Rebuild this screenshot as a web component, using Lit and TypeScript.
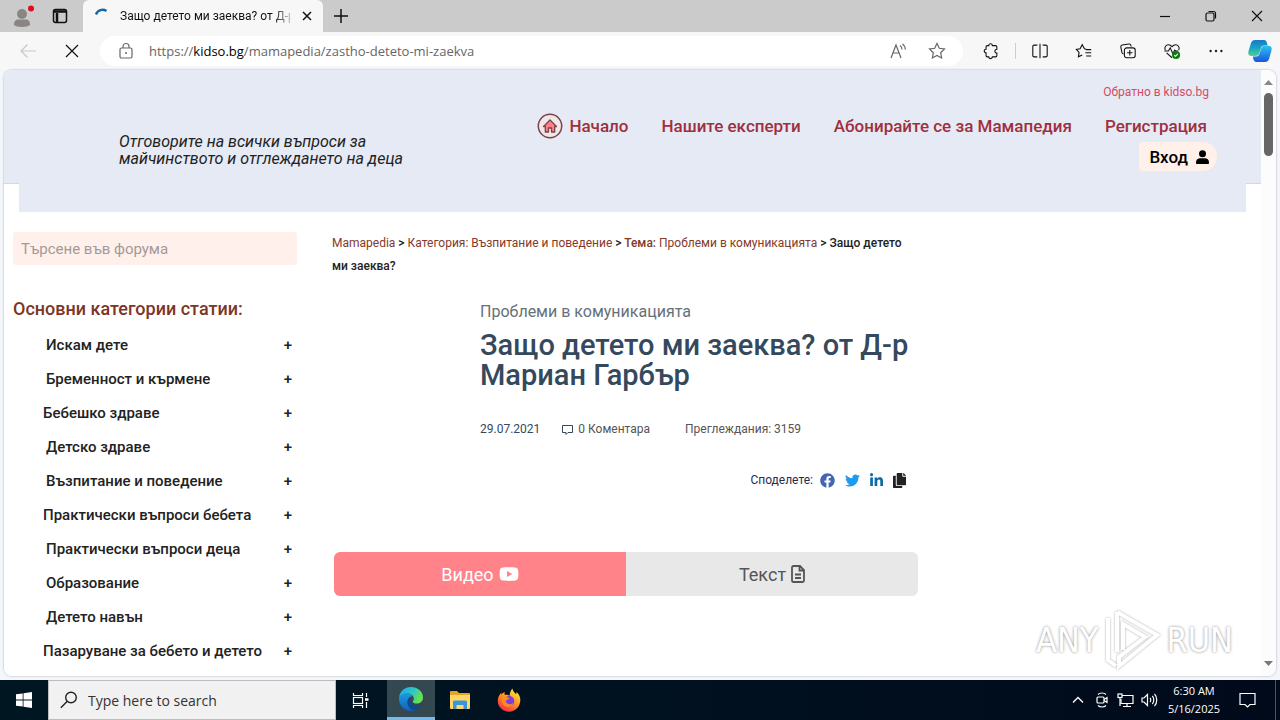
import { LitElement, html, css, svg } from "lit";
import { customElement } from "lit/decorators.js";
import { classMap } from "lit/directives/class-map.js";

const chromeIcons = {
  split: svg`<path d="M7 3.500H3.500A1.500 1.500 0 0 0 2 5v10a1.500 1.500 0 0 0 1.500 1.500H7M13 3.500h3.500A1.500 1.500 0 0 1 18 5v10a1.500 1.500 0 0 1-1.500 1.500H13M10 2v16"/>`,
  favs: svg`<path d="M12.500 8 10.500 7.600 8 3 5.700 7.500 1.500 8.200 4.500 11.500 3.800 16.500 8 14.400M12 8.500h6M11.500 12H18M12.500 15.500H18"/>`,
  collections: svg`<path d="M5 13.500 3.300 12 2 5.500A2 2 0 0 1 3.500 3.300L11 2.200a2 2 0 0 1 2.200 1.500L13.500 5"/><rect x="6" y="6.500" width="12" height="11" rx="2.500"/><path d="M12 9v6M9 12h6"/>`,
  more: svg`<g fill="#222" stroke="none"><circle cx="4" cy="10" r="1.300"/><circle cx="10" cy="10" r="1.300"/><circle cx="16" cy="10" r="1.300"/></g>`,
  heart: svg`<path d="M2.500 9C1 5.500 3.500 3 6 3c2 0 3 1 4 2.200C11 4 12 3 14 3c2.500 0 5 2.500 3.500 6M1.500 10H6l2-3.500 3 6.500 2-4 1 1h3M4 12l6 5.500"/><circle cx="14.500" cy="14.500" r="4.500" fill="#107c10" stroke="none"/><path d="m12.500 14.500 1.400 1.400 2.600-2.800" stroke="#fff"/>`,
  puzzle: svg`<path d="M7.500 4a2 2 0 1 1 4 0H15a1.500 1.500 0 0 1 1.500 1.500V8a2.200 2.200 0 1 0 0 4.400V15a1.500 1.500 0 0 1-1.500 1.500h-3.500a2 2 0 1 1-4 0H6A1.500 1.500 0 0 1 4.500 15v-3a2 2 0 1 1 0-4V5.500A1.500 1.500 0 0 1 6 4z"/>`,
};

@customElement("browser-chrome")
export class BrowserChrome extends LitElement {
  static styles = css`
    :host { display: block; font-family: "Open Sans", "Noto Sans", sans-serif; color: #111; }
    button { border: 0; padding: 0; margin: 0; background: none; font: inherit; color: inherit; display: flex; align-items: center; justify-content: center; }
    svg { display: block; flex: none; fill: none; stroke: currentColor; stroke-width: 1.200; }
    .strip { display: flex; height: 32px; background: #cbcbcb; }
    .left { display: flex; width: 83px; align-items: center; gap: 15px; padding-left: 10px; box-sizing: border-box; }
    .tab { display: flex; width: 240px; box-sizing: border-box; align-items: center; gap: 11px; padding: 0 10px; background: #f7f7f7; border-radius: 6px 6px 0 0; font-family: Roboto, sans-serif; font-size: 12px; }
    .tab-title { flex: 1; min-width: 0; white-space: nowrap; -webkit-mask-image: linear-gradient(90deg, #000 90%, #0004); mask-image: linear-gradient(90deg, #000 90%, #0004); }
    .new { width: 35px; }
    .window { display: flex; margin-left: auto; }
    .window button { width: 46px; }
    .toolbar { display: flex; height: 38px; align-items: center; background: #f7f7f7; padding: 0 10px 0 8px; box-sizing: border-box; }
    .nav { width: 40px; height: 32px; }
    .nav + .nav { width: 48px; }
    .off { color: #c8c8c8; }
    .omnibox { flex: 1; display: flex; align-items: center; height: 30px; background: #fff; border-radius: 15px; margin-left: 4px; padding: 0 16px 0 18px; gap: 15px; color: #666; font-size: 13px; }
    .url { flex: 1; white-space: nowrap; }
    .url b { font-weight: 400; color: #000; }
    .omnibox button { width: 20px; margin-left: 4px; }
    .tools { display: flex; align-items: center; gap: 24px; padding-left: 18px; }
    .tools button { width: 20px; height: 24px; }
    .tools .first { padding-right: 14px; border-right: 1px solid #ccc; width: 35px; box-sizing: border-box; margin-right: -10px; height: 16px; }
  `;

  private tool(label: string, icon: unknown, cls = "") {
    return html`<button class=${cls} aria-label=${label}><svg width="18" height="18" viewBox="0 0 20 20">${icon}</svg></button>`;
  }

  render() {
    return html`
      <div class="strip">
        <div class="left">
          <button aria-label="Profile"><svg width="26" height="24" viewBox="0 0 26 24"><g stroke="none"><circle cx="12" cy="10" r="5" fill="#8a8583"/><path d="M4 21c0-4 2-5.500 4-5.500h8c2.500 0 4 1.500 4 5.500-2 2.500-14 2.500-16 0z" fill="#8a8583"/><circle cx="21" cy="4.500" r="3" fill="#e00b1c"/></g></svg></button>
          <button aria-label="Tab actions"><svg width="18" height="16" viewBox="0 0 18 16"><rect x="2.500" y="1.500" width="13" height="13" rx="2" stroke-width="1.500"/><path d="M3 3.500h12M6 5v9" stroke-width="2.500"/></svg></button>
        </div>
        <div class="tab">
          <svg width="16" height="16" viewBox="0 0 16 16"><path d="M3 6.500A7 7 0 0 1 13.500 3" stroke="#1a66a3" stroke-width="2.400"/></svg>
          <span class="tab-title">Защо детето ми заеква? от Д-р</span>
          <button aria-label="Close tab"><svg width="12" height="12" viewBox="0 0 12 12"><path d="m2 2 8 8M10 2l-8 8" stroke-width="1.500"/></svg></button>
        </div>
        <button class="new" aria-label="New tab"><svg width="16" height="16" viewBox="0 0 16 16"><path d="M8 1v14M1 8h14" stroke-width="1.500"/></svg></button>
        <div class="window">
          <button aria-label="Minimize"><svg width="12" height="12" viewBox="0 0 12 12"><path d="M1 6.500h10"/></svg></button>
          <button aria-label="Restore"><svg width="12" height="12" viewBox="0 0 12 12"><rect x="1" y="3" width="8" height="8" rx="1.500"/><path d="M3.500 1.500h5a2 2 0 0 1 2 2v5"/></svg></button>
          <button aria-label="Close"><svg width="12" height="12" viewBox="0 0 12 12"><path d="m1 1 10 10M11 1 1 11"/></svg></button>
        </div>
      </div>
      <div class="toolbar">
        <button class="nav off" aria-label="Back"><svg width="18" height="16" viewBox="0 0 18 16"><path d="M17 8H2M8.500 1.500 2 8l6.500 6.500"/></svg></button>
        <button class="nav" aria-label="Stop"><svg width="14" height="14" viewBox="0 0 14 14"><path d="m1 1 12 12M13 1 1 13"/></svg></button>
        <div class="omnibox">
          <svg width="16" height="18" viewBox="0 0 16 18"><rect x="2" y="6" width="12" height="10" rx="1.500"/><path d="M5 6V4.500a3 3 0 0 1 6 0V6"/><circle cx="8" cy="11" r="1" fill="#666" stroke="none"/></svg>
          <span class="url">https://<b>kidso.bg</b>/mamapedia/zastho-deteto-mi-zaekva</span>
          <button aria-label="Read aloud"><svg width="18" height="18" viewBox="0 0 18 18"><path d="M2 16 7 3l5 13M4 11h6M11 3.500c1.500 1 2 2.300 2 4M13.500 2c2 1.500 2.800 3.300 2.800 5.500"/></svg></button>
          <button aria-label="Favorite"><svg width="18" height="18" viewBox="0 0 18 18"><path d="m9 1.500 2.300 4.800 5.200.7-3.800 3.700.9 5.300L9 13.500 4.400 16l.9-5.300L1.500 7l5.200-.7z"/></svg></button>
        </div>
        <div class="tools">
          ${this.tool("Extensions", chromeIcons.puzzle, "first")}
          ${this.tool("Split screen", chromeIcons.split)}
          ${this.tool("Favorites", chromeIcons.favs)}
          ${this.tool("Collections", chromeIcons.collections)}
          ${this.tool("Browser essentials", chromeIcons.heart)}
          ${this.tool("Settings", chromeIcons.more)}
          <button aria-label="Copilot"><svg width="24" height="24" viewBox="0 0 24 24"><defs><linearGradient id="cp1" x1="0" y1="0" x2="0" y2="1"><stop offset="0" stop-color="#1779c9"/><stop offset=".5" stop-color="#16a5c8"/><stop offset="1" stop-color="#53d190"/></linearGradient><linearGradient id="cp2" x1="0" y1="0" x2="0" y2="1"><stop offset="0" stop-color="#2bc4f0"/><stop offset="1" stop-color="#1a55dd"/></linearGradient></defs><g stroke="none"><path d="M7 1h9c2 0 2.500 1.500 3 3l.6 2.500h-3.400c-2 0-2.800 1-3.300 2.800L11.500 14c-.7 2.300-1.700 3-4 3H3.500C0 17 0 14 .7 11.500L3 4c.7-2 2-3 4-3z" fill="url(#cp1)"/><path d="M17 23H8.500c-2 0-2.700-1.500-3.200-3L5 17.500h3c2 0 3-1 3.500-2.800L13 10c.7-2.300 1.700-3.300 4-3.300h3.500c3.500 0 3.500 3 2.800 5.500L21 20c-.7 2-2 3-4 3z" fill="url(#cp2)"/></g></svg></button>
        </div>
      </div>`;
  }
}

const categories: { name: string; wide?: boolean }[] = [
  { name: "Искам дете" },
  { name: "Бременност и кърмене" },
  { name: "Бебешко здраве", wide: true },
  { name: "Детско здраве" },
  { name: "Възпитание и поведение" },
  { name: "Практически въпроси бебета", wide: true },
  { name: "Практически въпроси деца" },
  { name: "Образование" },
  { name: "Детето навън" },
  { name: "Пазаруване за бебето и детето", wide: true },
];

@customElement("forum-page")
export class ForumPage extends LitElement {
  static styles = css`
    :host { display: block; font-family: Roboto, "Noto Sans", sans-serif; color: #222; background: #fff; }
    a { color: inherit; text-decoration: none; }
    button { border: 0; margin: 0; font: inherit; color: inherit; }
    .band { display: flex; justify-content: space-between; height: 114px; box-sizing: border-box; background: #e5eaf5; border-bottom: 1px solid #d3d9e3; padding: 0 44px 0 115px; }
    .tail { position: relative; height: 29px; margin: -1px 15px 0; background: #e5eaf5; }
    .tagline { margin: 0; padding-top: 63px; width: 320px; font-size: 16px; line-height: 17px; font-style: italic; }
    .head-right { display: flex; flex-direction: column; align-items: flex-end; }
    .back { padding: 14px 8px 0 0; font-size: 12px; line-height: 16px; color: #d64b62; }
    .menu { display: flex; align-items: center; gap: 33px; padding: 12px 10px 2px 0; font-size: 17px; line-height: 28px; font-weight: 500; color: #a02f3e; white-space: nowrap; }
    .home { display: flex; align-items: center; gap: 6px; }
    .login { display: flex; align-items: center; gap: 8px; height: 29px; padding: 0 8px 0 10px; background: #fff0ea; color: #000; border-radius: 3px 14px 14px 3px; font-size: 17px; font-weight: 500; }
    .columns { display: grid; grid-template-columns: minmax(0, 284fr) minmax(0, 586fr) minmax(0, 308fr); column-gap: 35px; padding: 20px 0 0 9px; }
    .search { display: block; width: 100%; box-sizing: border-box; height: 33px; border: 0; border-radius: 3px; padding: 0 8px; background: #fff0eb; font: inherit; font-size: 14px; }
    .search { font-size: 15px; }
    .search::placeholder { color: #a39a98; opacity: 1; }
    .side-title { margin: 32px 0 7px; font-size: 18px; line-height: 24px; font-weight: 500; color: #7d3526; white-space: nowrap; }
    .cats { list-style: none; margin: 0; padding: 0; font-size: 15px; font-weight: 500; }
    .cat { display: flex; justify-content: space-between; align-items: center; height: 34px; padding: 0 5px 0 33px; white-space: nowrap; }
    .cat.wide { padding-left: 30px; }
    .plus { background: none; padding: 0; }
    .crumbs { font-size: 12px; line-height: 23px; font-weight: 500; }
    .crumbs a { color: #84392b; font-weight: 400; }
    .crumbs b { color: #84392b; font-weight: 500; }
    .article { padding: 22px 0 0 148px; }
    .topic { margin: 0; font-size: 16px; line-height: 24px; color: #66707a; }
    .title { margin: 6px 0 0; font-size: 29px; line-height: 30px; font-weight: 500; color: #34495e; }
    .meta { display: flex; align-items: center; padding-top: 30px; font-size: 12px; line-height: 18px; color: #555; }
    .date { color: #34495e; margin-right: 22px; }
    .comments { display: flex; align-items: center; gap: 5px; margin-right: 35px; }
    .share { display: flex; align-items: center; justify-content: flex-end; gap: 10px; padding: 32px 12px 0 0; font-size: 12px; line-height: 20px; color: #1f2d50; }
    .share span { margin-right: -3px; }
    .share a, .share a svg { display: block; }
    .tabs { display: flex; margin: 62px 0 0 2px; height: 44px; border-radius: 6px; overflow: hidden; }
    .tabs button { flex: 1; display: flex; align-items: center; justify-content: center; gap: 5px; font-size: 18px; background: #e8e8e8; color: #555; }
    .tabs .on { background: #ff8389; color: #fff; }
  `;

  render() {
    return html`
      <div lang="bg">
        <header>
          <div class="band">
            <p class="tagline">Отговорите на всички въпроси за майчинството и отглеждането на деца</p>
            <div class="head-right">
              <a class="back" href="#">Обратно в kidso.bg</a>
              <nav class="menu">
                <a class="home" href="#"><svg width="26" height="26" viewBox="0 0 26 26"><circle cx="13" cy="13" r="11.700" fill="#efe8e8" stroke="#7d4148" stroke-width="1.500"/><path d="M6.500 13.500 13 7l6.500 6.500h-1.800V19h-3.200v-4h-3v4H8.300v-5.500z" fill="#ff7f88" stroke="#7d4148" stroke-width="1.300" stroke-linejoin="round"/></svg>Начало</a>
                <a href="#">Нашите експерти</a>
                <a href="#">Абонирайте се за Мамапедия</a>
                <a href="#">Регистрация</a>
              </nav>
              <button class="login">Вход<svg width="13" height="14" viewBox="0 0 13 14"><circle cx="6.500" cy="3.800" r="3.500"/><path d="M1 14C.3 14 0 13.500 0 12.500 0 9.500 2 8.200 4 8.200h5c2 0 4 1.300 4 4.300 0 1-.3 1.500-1 1.500z"/></svg></button>
            </div>
          </div>
          <div class="tail"></div>
        </header>
        <div class="columns">
          <aside>
            <input class="search" type="search" aria-label="Търсене във форума" placeholder="Търсене във форума" />
            <h2 class="side-title">Основни категории статии:</h2>
            <ul class="cats">
              ${categories.map((c) => html`<li class=${classMap({ cat: true, wide: !!c.wide })}><a href="#">${c.name}</a><button class="plus" aria-label="Разгъване">+</button></li>`)}
            </ul>
          </aside>
          <main>
            <nav class="crumbs"><a href="#">Mamapedia</a> &gt; <a href="#">Категория: Възпитание и поведение</a> &gt; <b>Тема:</b> <a href="#">Проблеми в комуникацията</a> &gt; Защо детето ми заеква?</nav>
            <div class="article">
              <p class="topic">Проблеми в комуникацията</p>
              <h1 class="title">Защо детето ми заеква? от Д-р Мариан Гарбър</h1>
              <div class="meta">
                <span class="date">29.07.2021</span>
                <span class="comments"><svg width="11" height="11" viewBox="0 0 11 11" fill="none" stroke="#34495e"><path d="M.5 1.500h10v7H6L4 10.500v-2H.5z"/></svg>0 Коментара</span>
                <span>Преглеждания: 3159</span>
              </div>
            </div>
            <div class="share">
              <span>Споделете:</span>
              <a href="#" aria-label="Facebook"><svg width="15" height="15" viewBox="0 0 512 512"><path fill="#4267b2" d="M504 256C504 119 393 8 256 8S8 119 8 256c0 123.800 90.700 226.400 209.300 245V327.700h-63V256h63v-54.600c0-62.200 37-96.500 93.700-96.500 27.100 0 55.500 4.800 55.500 4.800v61h-31.300c-30.800 0-40.400 19.100-40.400 38.700V256h68.800l-11 71.700h-57.800V501C413.300 482.400 504 379.800 504 256z"/></svg></a>
              <a href="#" aria-label="Twitter"><svg width="15" height="15" viewBox="0 0 512 512"><path fill="#1d9bf0" d="M459.400 151.700c.3 4.500.3 9.100.3 13.600 0 138.700-105.600 298.600-298.600 298.600-59.500 0-114.700-17.200-161.100-47.100 8.400 1 16.600 1.300 25.300 1.300 49.100 0 94.200-16.600 130.300-44.800-46.100-1-84.800-31.200-98.100-72.800 6.500 1 13 1.600 19.800 1.600 9.400 0 18.800-1.300 27.600-3.600-48.100-9.700-84.100-52-84.100-103v-1.300c14 7.800 30.200 12.700 47.400 13.300-28.300-18.800-46.800-51-46.800-87.400 0-19.500 5.200-37.400 14.300-53 51.700 63.700 129.300 105.300 216.400 109.800-1.600-7.800-2.600-15.900-2.600-24 0-57.800 46.800-104.900 104.900-104.900 30.200 0 57.500 12.700 76.700 33.100 23.700-4.500 46.500-13.300 66.600-25.300-7.800 24.400-24.400 44.800-46.100 57.800 21.100-2.300 41.600-8.100 60.400-16.200-14.300 20.800-32.200 39.300-52.600 54.300z"/></svg></a>
              <a href="#" aria-label="LinkedIn"><svg width="13" height="15" viewBox="0 0 448 512"><path fill="#0a6ba5" d="M100.300 448H7.400V148.900h92.900zM53.800 108.100C24.100 108.100 0 83.500 0 53.800a53.800 53.800 0 0 1 107.600 0c0 29.700-24.100 54.300-53.800 54.300zM447.900 448h-92.700V302.400c0-34.700-.7-79.200-48.300-79.200-48.300 0-55.700 37.700-55.700 76.700V448h-92.800V148.900h89.100v40.800h1.300c12.400-23.500 42.700-48.300 87.900-48.300 94 0 111.300 61.900 111.300 142.300V448z"/></svg></a>
              <a href="#" aria-label="Копиране"><svg width="13" height="15" viewBox="0 0 448 512"><path fill="#222" d="M320 448v40c0 13-11 24-24 24H24c-13 0-24-11-24-24V120c0-13 11-24 24-24h72v296c0 31 25 56 56 56h168zm0-344V0H152c-13 0-24 11-24 24v368c0 13 11 24 24 24h272c13 0 24-11 24-24V128H344c-13 0-24-11-24-24zm121-31L375 7a24 24 0 0 0-17-7h-6v96h96v-6a24 24 0 0 0-7-17z"/></svg></a>
            </div>
            <div class="tabs">
              <button class="on">Видео<svg width="20" height="16" viewBox="0 0 20 16"><path fill="#fff" fill-rule="evenodd" d="M3.500 1.500C6 1 14 1 16.500 1.500 18.500 2 19 3 19.200 5c.2 2 .2 4 0 6-.2 2-.7 3-2.700 3.500-2.500.5-10.500.5-13 0C1.500 14 1 13 .8 11c-.2-2-.2-4 0-6 .2-2 .7-3 2.700-3.500zM8 5v6l5.200-3z"/></svg></button>
              <button>Текст<svg width="14" height="18" viewBox="0 0 14 18" fill="none" stroke="#555" stroke-width="1.800"><path d="M1 2.500A1.500 1.500 0 0 1 2.500 1H9l4 4v10.500a1.500 1.500 0 0 1-1.500 1.500h-9A1.500 1.500 0 0 1 1 15.500zM8.500 1v4.500H13M4 9.500h6M4 13h6"/></svg></button>
            </div>
          </main>
        </div>
      </div>`;
  }
}

@customElement("task-bar")
export class TaskBar extends LitElement {
  static styles = css`
    :host { display: flex; height: 40px; background: linear-gradient(90deg, #001722, #00101f 60%, #000a1a); color: #fff; font-family: "Open Sans", "Noto Sans", sans-serif; }
    button { display: flex; align-items: center; justify-content: center; border: 0; margin: 0; padding: 0; background: none; color: inherit; font: inherit; }
    svg { display: block; }
    .app { width: 49px; }
    .view { width: 51px; padding-right: 2px; }
    .start { width: 48px; }
    .active { width: 48px; background: #344850; border-bottom: 3px solid #76b9ed; }
    .search { display: flex; align-items: center; gap: 10px; width: 288px; box-sizing: border-box; padding: 0 11px; background: #f1f1f1; border: 1px solid #bdbdbd; }
    .search input { flex: 1; min-width: 0; border: 0; padding: 0; background: none; font: inherit; font-size: 14px; outline: 0; }
    .search input::placeholder { color: #333; opacity: 1; }
    .tray { display: flex; align-items: center; gap: 7px; margin-left: auto; }
    .tray button { width: 17px; height: 40px; }
    .tray .clock { display: block; width: 58px; margin-right: -4px; font-size: 11px; line-height: 18px; text-align: center; white-space: nowrap; }
    .tray .notes { width: 42px; }
    .tray .peek { width: 5px; border-left: 1px solid #4a5564; }
  `;

  render() {
    return html`
      <button class="start" aria-label="Start"><svg width="16" height="16" viewBox="0 0 16 16" fill="#fff"><path d="M0 2.300 6.700 1.400v6.200H0zM7.500 1.200 16 0v7.600H7.500zM0 8.400h6.700v6.200L0 13.700zM7.500 8.400H16V16l-8.500-1.200z"/></svg></button>
      <label class="search"><svg width="18" height="18" viewBox="0 0 18 18" fill="none" stroke="#222" stroke-width="1.400"><circle cx="11" cy="6.500" r="5.300"/><path d="M7.300 10.300.8 16.800"/></svg><input type="text" aria-label="Type here to search" placeholder="Type here to search" /></label>
      <button class="view" aria-label="Task view"><svg width="17" height="17" viewBox="0 0 17 17" fill="none" stroke="#fff" stroke-width="1.200"><path d="M1.500 1v2.500h9V1M1.500 16v-2.500h9V16M14.500 1v4M14.500 10v6"/><rect x="1.500" y="5.500" width="9" height="6"/><path d="M13 7.500h3.500" stroke-width="2.500"/></svg></button>
      <button class="active" aria-label="Microsoft Edge"><svg width="24" height="24" viewBox="0 0 24 24"><defs><linearGradient id="e1" x1="0" y1="0" x2="1" y2=".4"><stop offset="0" stop-color="#1da5e8"/><stop offset=".6" stop-color="#30c7c4"/><stop offset="1" stop-color="#66e34b"/></linearGradient><linearGradient id="e2" x1="0" y1="0" x2="0" y2="1"><stop offset="0" stop-color="#1a9be0"/><stop offset="1" stop-color="#1060bd"/></linearGradient></defs><path d="M0 11C.5 4.500 5.500 0 12 0s12 4.500 12 10.500c0 3.500-2.500 6-6 6-2.500 0-4.200-.8-4.200-1.800 0-.8 1-1.200 1-3C14.800 9 12 6.500 8.500 6.500 4.500 6.500 1 8.500 0 11z" fill="url(#e1)"/><path d="M0 11c1-2.800 4-4.700 7.800-4.700 2.500 0 4.700 1 5.900 2.700-3 .3-5.200 3-5.200 6 0 4 3.200 8 7.200 8.400C14.500 24 13.200 24 12 24 5 24-.5 18 0 11z" fill="url(#e2)"/><path d="M8.500 15c0-2 .9-3.900 2.500-5-.6 5 2.500 8.300 7 8.300 1.800 0 3.200-.7 4.300-1.300-1.200 2.700-4 6.200-7.300 6.300-3.600-.4-6.500-4.300-6.500-8.300z" fill="#114a8b"/></svg></button>
      <button class="app" aria-label="File Explorer"><svg width="22" height="20" viewBox="0 0 22 20"><path d="M1 2a1 1 0 0 1 1-1h6l2 2h10a1 1 0 0 1 1 1v4H1z" fill="#e8a420"/><path d="M1 5h20v13a1 1 0 0 1-1 1H2a1 1 0 0 1-1-1z" fill="#ffd768"/><path d="M4 19v-7a1.500 1.500 0 0 1 1.500-1.500h11A1.500 1.500 0 0 1 18 12v7h-3.500v-4h-7v4z" fill="#3a95d8"/></svg></button>
      <button class="app" aria-label="Firefox"><svg width="24" height="24" viewBox="0 0 24 24"><defs><linearGradient id="f1" x1=".8" y1="0" x2=".2" y2="1"><stop offset="0" stop-color="#ffec45"/><stop offset=".45" stop-color="#ff9a20"/><stop offset="1" stop-color="#f5204e"/></linearGradient></defs><path d="M15.500.5c0 2.500 2 3.800 3.700 5.800.3-.8.300-1.500.1-2.300C22 6 23.500 9 23.300 12.500 23 19 18 23.700 12 23.700S.8 19 .8 13c0-3.800 1.700-6.500 3.500-8.500v2.300C6 4.500 8 3.800 8 3.800S6.800 5.500 8 7c1.800-.5 3.500.2 4.500 1 .3-3 1-5.500 3-7.500z" fill="url(#f1)"/><circle cx="12.300" cy="13" r="5" fill="#7a3fe0"/><path d="M5 9c2-.5 6 0 7.500 1.500-1 1.500-3.500 1-3.700 2.500 0 3 4.700 4.500 7.200 2-1 4-6 5-9 2.500C5 15.500 4.500 12 5 9z" fill="#ff8a1f"/></svg></button>
      <div class="tray">
        <button aria-label="Show hidden icons"><svg width="12" height="8" viewBox="0 0 12 8" fill="none" stroke="#fff" stroke-width="1.300"><path d="m1 6.500 5-5 5 5"/></svg></button>
        <button aria-label="Meet now"><svg width="14" height="16" viewBox="0 0 14 16" fill="none" stroke="#fff" stroke-width="1.200"><rect x="2" y="5" width="7" height="6" rx="1"/><path d="m9 7.500 3-2v5l-3-2M3 2.500c2-2 6-2 8 0M3 13.500c2 2 6 2 8 0"/></svg></button>
        <button aria-label="Network"><svg width="17" height="15" viewBox="0 0 17 15" fill="none" stroke="#fff" stroke-width="1.200"><path d="M5 2.500h11v8H4V6M10 10.500v3M6 13.500h8"/><rect x="1" y="1" width="4" height="3.500"/><path d="M3 4.500V13"/></svg></button>
        <button aria-label="Volume"><svg width="17" height="14" viewBox="0 0 17 14" fill="none" stroke="#fff" stroke-width="1.200"><path d="M1 5h2l3.500-3.500v11L3 9H1zM9 5c1 1 1 3 0 4M11.300 3c2 2 2 6 0 8M13.500 1c3 3 3 9 0 12"/></svg></button>
        <button class="clock">6:30 AM<br />5/16/2025</button>
        <button class="notes" aria-label="Notifications"><svg width="17" height="16" viewBox="0 0 17 16" fill="none" stroke="#fff" stroke-width="1.200"><path d="M1 1.500h15v11h-5L8.500 15 6 12.500H1z"/></svg></button>
        <button class="peek" aria-label="Show desktop"></button>
      </div>`;
  }
}

@customElement("app-root")
export class AppRoot extends LitElement {
  static styles = css`
    :host { display: flex; flex-direction: column; height: 100vh; overflow: hidden; background: #f3f6fa; }
    .frame { position: relative; flex: 1; min-height: 0; display: flex; margin: 0 4px 4px; border-radius: 8px; overflow: hidden; background: #fff; box-shadow: 0 0 2px #999; }
    .page { flex: 1; min-width: 0; overflow: hidden; }
    .bar { display: flex; flex-direction: column; align-items: center; width: 15px; padding: 10px 0; box-sizing: border-box; background: #fcfcfc; }
    .thumb { width: 9px; height: 63px; margin: 8px 0 auto; border-radius: 5px; background: #666; }
    .mark { position: absolute; right: 43px; bottom: 4px; display: flex; align-items: center; gap: 5px; font: 34px/64px "DejaVu Sans Condensed", sans-serif; color: #fff; text-shadow: 0 0 3px #888; }
    .mark svg { filter: drop-shadow(0 0 1px #aaa); }
  `;

  render() {
    return html`
      <browser-chrome></browser-chrome>
      <div class="frame">
        <forum-page class="page"></forum-page>
        <div class="bar">
          <svg width="9" height="5" viewBox="0 0 9 5"><path d="M0 5 4.500 0 9 5z" fill="#888"/></svg>
          <div class="thumb"></div>
          <svg width="9" height="5" viewBox="0 0 9 5"><path d="M0 0h9L4.500 5z" fill="#777"/></svg>
        </div>
        <div class="mark"><span>ANY</span><svg width="58" height="64" viewBox="0 0 58 64" fill="none" stroke="#fff" stroke-width="4"><path d="M14 4v40M14 4l40 23-38 31v-9l26-20-22-13v26"/><path d="M5 10v42l8 6"/></svg><span>RUN</span></div>
      </div>
      <task-bar></task-bar>`;
  }
}
